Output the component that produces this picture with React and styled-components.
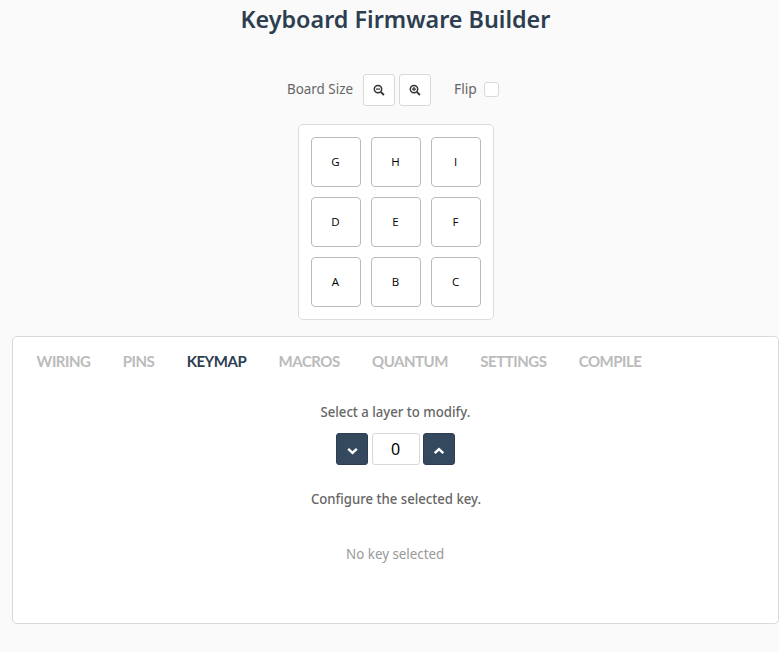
import React from 'react';
import styled, { createGlobalStyle } from 'styled-components';

const GlobalStyle = createGlobalStyle`
  * { box-sizing: border-box; }
  body {
    margin: 0;
    background: #fafafa;
    font-family: "Noto Sans", sans-serif;
    color: #666;
    overflow: hidden;
  }
`;

const Page = styled.main`
  height: 652px;
  padding-left: 12px;
  display: flex;
  flex-direction: column;
  align-items: center;
`;

const Label = styled.span`
  display: block;
  white-space: nowrap;
  font-size: 15px;
  font-weight: ${(p) => p.$weight || 400};
  line-height: 20px;
  transform: scaleX(${(p) => p.$stretch || 1});
  transform-origin: ${(p) => p.$origin || 'center'};
`;

const Title = styled.h1`
  margin: 0;
  height: 74px;
  padding-top: 3px;
  font-size: 24px;
  font-weight: 600;
  line-height: 32px;
  color: #2c3e50;
  white-space: nowrap;
  transform: scaleX(0.972);
`;

const Toolbar = styled.div`
  width: 217px;
  height: 32px;
  display: flex;
  align-items: center;
`;

const LabelSlot = styled.div`
  width: ${(p) => p.$width}px;
  flex: none;
  padding-bottom: 4px;
`;

const IconButton = styled.button`
  width: 32px;
  height: 32px;
  flex: none;
  margin-right: 4px;
  padding: 0;
  display: flex;
  align-items: center;
  justify-content: center;
  background: #fff;
  border: 1px solid #d9d9d9;
  border-radius: 3px;
  color: #333;
`;

const FlipGroup = styled.label`
  display: flex;
  align-items: center;
  margin-left: 19px;
`;

const Checkbox = styled.span`
  width: 15px;
  height: 15px;
  margin-bottom: 1px;
  background: #fff;
  border: 1px solid #d9d9d9;
  border-radius: 3px;
`;

const Board = styled.section`
  margin-top: 18px;
  width: 196px;
  height: 196px;
  padding: 12px;
  display: grid;
  grid-template-columns: repeat(3, 50px);
  grid-auto-rows: 50px;
  gap: 10px;
  background: #fff;
  border: 1px solid #ddd;
  border-radius: 5px;
`;

const Key = styled.button`
  padding: 0;
  background: #fff;
  border: 1px solid #bbb;
  border-radius: 4px;
  font: 500 11.5px/48px "Open Sans", sans-serif;
  color: #000;
`;

const Panel = styled.section`
  margin-top: 16px;
  width: 767px;
  height: 288px;
  display: flex;
  flex-direction: column;
  align-items: center;
  background: #fff;
  border: 1px solid #d9d9d9;
  border-radius: 5px;
`;

const Tabs = styled.nav`
  align-self: stretch;
  height: 48px;
  padding-left: 23.6px;
  display: flex;
  align-items: center;
  gap: 32.3px;
`;

const Tab = styled.a`
  font: 700 15px/20px Lato, sans-serif;
  letter-spacing: -0.48px;
  color: ${(p) => (p.$active ? '#2c3e50' : '#bbb')};
`;

const Prompt = styled.div`
  margin-top: ${(p) => p.$top}px;
  color: ${(p) => (p.$muted ? '#999' : '#666')};
`;

const LayerPicker = styled.div`
  margin-top: 12px;
  display: flex;
`;

const StepButton = styled.button`
  width: 32px;
  height: 32px;
  padding: 3px 0 0;
  display: flex;
  align-items: center;
  justify-content: center;
  background: #34495e;
  border: 1px solid #2c3e50;
  border-radius: 3px;
  color: #fff;
`;

const LayerValue = styled.div`
  width: 48px;
  height: 32px;
  margin: 0 3px 0 4px;
  padding-right: 1px;
  text-align: center;
  font-size: 16px;
  line-height: 31px;
  color: #000;
  background: #fff;
  border: 1px solid #d9d9d9;
  border-radius: 3px;
`;

const ZoomIcon = ({ plus }) => (
  <svg width="12" height="12" viewBox="0 0 12 12" fill="none" stroke="currentColor">
    <circle cx="5" cy="5.1" r="3.7" strokeWidth="1.5" />
    <path d="M7.8 7.9 10.9 11" strokeWidth="1.9" />
    <path d={plus ? 'M3 5.1h4M5 3.1v4' : 'M3 5.1h4'} strokeWidth="1.2" />
  </svg>
);

const Chevron = ({ up }) => (
  <svg width="12" height="8" viewBox="0 0 12 8" fill="none" stroke="currentColor" strokeWidth="2.5">
    <path d={up ? 'M1.7 6.2 6 2.2l4.3 4' : 'M2.2 1.8 6.5 5.8l4.3-4'} />
  </svg>
);

const keys = ['G', 'H', 'I', 'D', 'E', 'F', 'A', 'B', 'C'];
const tabs = ['WIRING', 'PINS', 'KEYMAP', 'MACROS', 'QUANTUM', 'SETTINGS', 'COMPILE'];

export default function App() {
  return (
    <>
      <GlobalStyle />
      <Page>
        <Title>Keyboard Firmware Builder</Title>
        <Toolbar>
          <LabelSlot $width={76}>
            <Label $origin="left" $stretch={0.894}>Board Size</Label>
          </LabelSlot>
          <IconButton aria-label="Smaller"><ZoomIcon /></IconButton>
          <IconButton aria-label="Larger"><ZoomIcon plus /></IconButton>
          <FlipGroup>
            <LabelSlot $width={30}>
              <Label $origin="left" $stretch={0.92}>Flip</Label>
            </LabelSlot>
            <Checkbox role="checkbox" aria-checked="false" />
          </FlipGroup>
        </Toolbar>
        <Board>
          {keys.map((k) => <Key key={k}>{k}</Key>)}
        </Board>
        <Panel>
          <Tabs>
            {tabs.map((t) => <Tab key={t} $active={t === 'KEYMAP'}>{t}</Tab>)}
          </Tabs>
          <Prompt $top={16}>
            <Label $weight={500} $stretch={0.877}>Select a layer to modify.</Label>
          </Prompt>
          <LayerPicker>
            <StepButton aria-label="Previous layer"><Chevron /></StepButton>
            <LayerValue>0</LayerValue>
            <StepButton aria-label="Next layer"><Chevron up /></StepButton>
          </LayerPicker>
          <Prompt $top={23}>
            <Label $weight={500} $stretch={0.877}>Configure the selected key.</Label>
          </Prompt>
          <Prompt $top={35} $muted>
            <Label $stretch={0.89}>No key selected</Label>
          </Prompt>
        </Panel>
      </Page>
    </>
  );
}
